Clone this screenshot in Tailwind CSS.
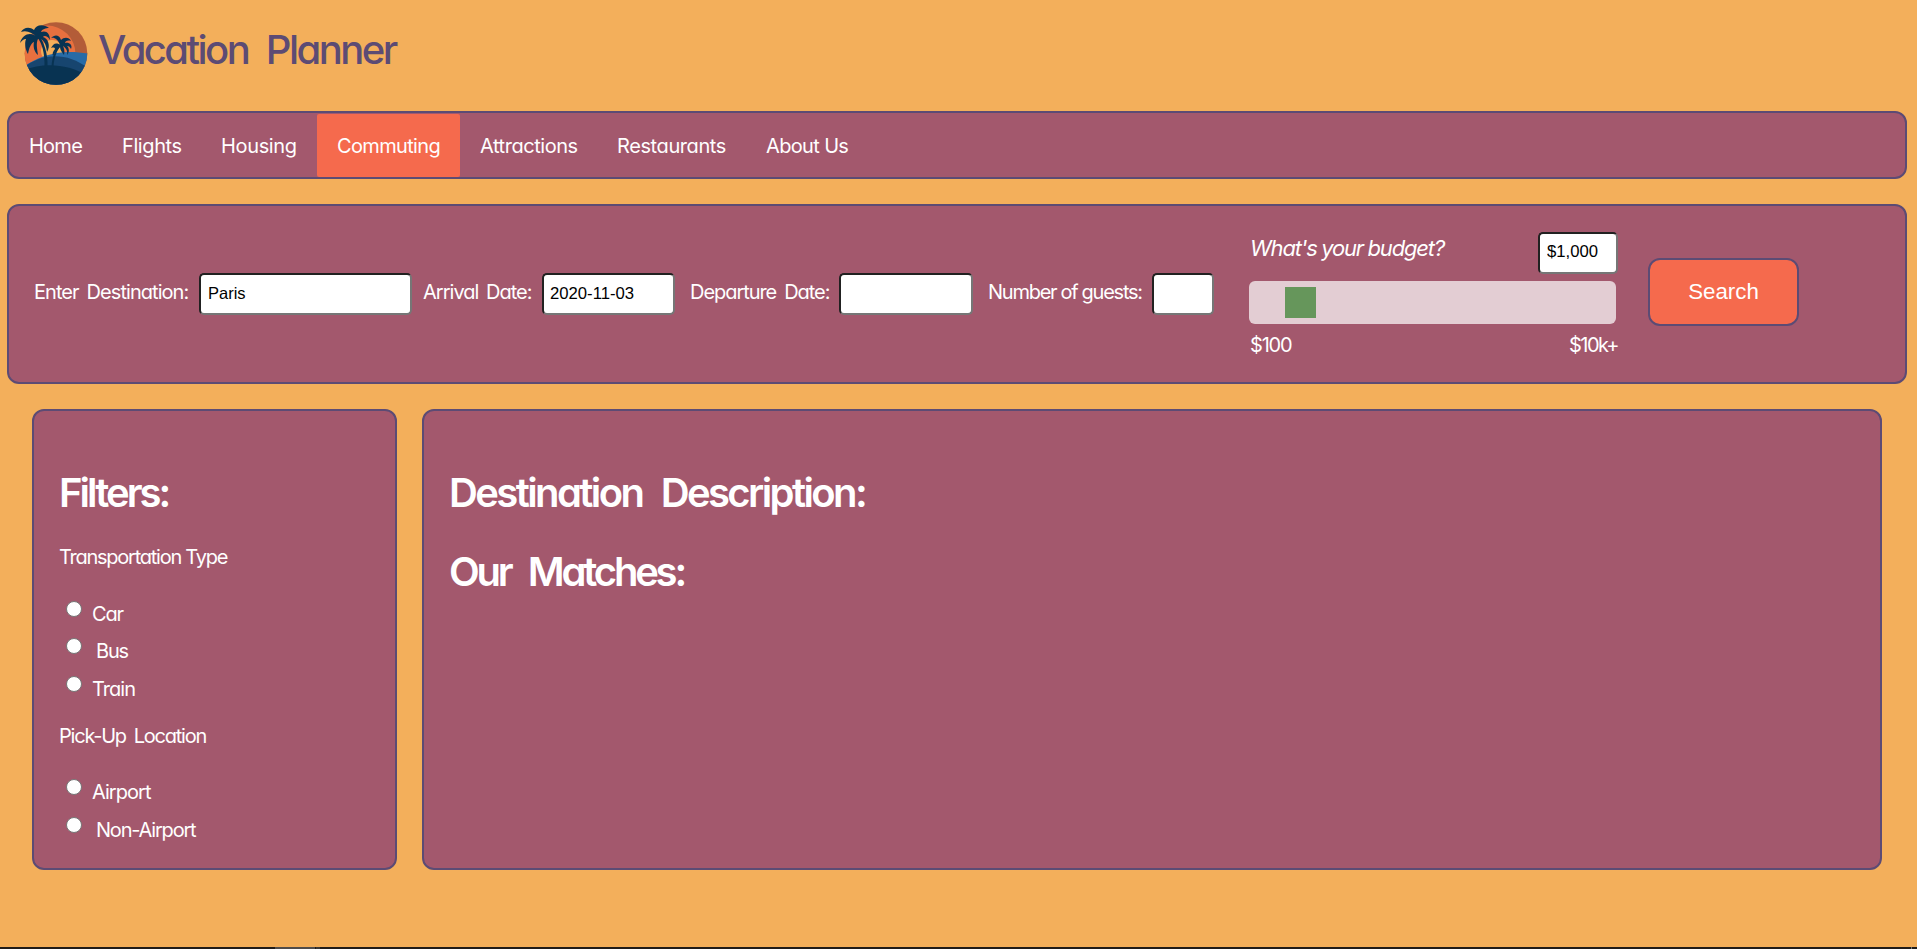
<!DOCTYPE html>
<html lang="en">
<head>
<meta charset="utf-8">
<title>Vacation Planner</title>
<script src="https://cdn.jsdelivr.net/npm/@tailwindcss/browser@4"></script>
</head>
<body class="flex h-[949px] w-[1917px] flex-col overflow-hidden bg-[#f3af5b] font-['Inter',sans-serif] text-xl whitespace-nowrap text-white [font-feature-settings:'cv11']">
<header class="flex h-[111px] pt-[10px] pl-[10px]">
<svg class="size-[90px]" viewBox="0 0 90 90">
<defs><clipPath id="disc"><circle cx="46" cy="43.5" r="31.3"/></clipPath></defs>
<g clip-path="url(#disc)">
<rect width="90" height="90" fill="#b35c38"/>
<circle cx="37" cy="44" r="28.5" fill="#e8703f"/>
<circle cx="42" cy="41" r="11" fill="#f3af5b"/>
<path d="M12 58C28 46 50 38 80 44V90H12Z" fill="#286ba6"/>
<path d="M12 59C30 43 58 41 80 60V90H12Z" fill="#17456f"/>
<path d="M12 61C32 52 58 53 80 67V90H12Z" fill="#083352"/>
</g>
<g fill="#083352">
<path d="M27 27C32 33 35 43 34.500 57H37.500C38 43 34 33 29.500 26Z"/>
<path d="M28 28C23 22 13 22 10 33C13 29 15 29 16 29C14 34 16 41 18 44C19 38 21 33 24 32C23 36 24 42 28 45C27 38 26 33 28 29C32 28 36 32 37 42C41 36 38 28 33 27C34 25 38 26 40 30C40 23 36 20 31 22C32 19 36 18 39 18C34 14 26 14 24 20C19 16 13 18 11 22C16 20 22 22 28 28Z"/>
<path d="M50 34C46 38 42 46 41.500 57H43.500C44 47 47 40 51.500 35Z"/>
<path d="M50 35C46 32 43 34 41 38C44 37 45 38 45 39C43 41 42 44 43 46C45 43 47 39 50 37C50 40 52 42 54 45C55 41 54 38 53 36C56 38 58 41 57 45C60 42 59 38 57 36C59 36 60 37 61 39C63 35 59 32 55 33C55 31 58 30 61 31C59 27 54 27 51 30C49 24 44 25 41 28C44 27 48 29 50 35Z"/>
</g>
</svg>
<h1 class="mt-6 -ml-[2px] text-[40px] leading-[32px] font-[450] tracking-[-2.55px] [word-spacing:9.5px] text-[#5c4b74]">Vacation Planner</h1>
</header>
<nav class="ml-[7px] flex h-[68px] w-[1900px] rounded-xl border-2 border-[#5c4b74] bg-[#a3586d] pt-px leading-[65px]">
<a class="w-[92px] pl-5 tracking-[-.75px]">Home</a>
<a class="w-[100px] pl-[21px] tracking-[-.4px]">Flights</a>
<a class="w-[116px] pl-5 tracking-[-.35px]">Housing</a>
<a class="h-[63px] w-[143px] rounded-xs bg-[#f56a4d] pl-5 tracking-[-.65px]">Commuting</a>
<a class="w-[137px] pl-5 tracking-[-.45px]">Attractions</a>
<a class="w-[149px] pl-5 tracking-[-.4px]">Restaurants</a>
<a class="pl-5 tracking-[-.65px]">About Us</a>
</nav>
<form class="mt-[25px] ml-[7px] flex h-[180px] w-[1900px] items-center rounded-xl border-2 border-[#5c4b74] bg-[#a3586d] pl-6">
<label class="w-[166px] pb-1 pl-px tracking-[-.95px] [word-spacing:3.3px]">Enter Destination:</label>
<input class="h-[42px] w-[213px] rounded-[5px] border-2 border-t-[#212121] border-r-[#767676] border-b-[#767676] border-l-[#212121] bg-white px-[7px] pb-px font-['Liberation_Sans',sans-serif] text-[16.5px] text-black" value="Paris">
<label class="ml-[11px] w-[119px] pb-1 tracking-[-.97px] [word-spacing:2.8px]">Arrival Date:</label>
<input class="h-[42px] w-[133px] rounded-[5px] border-2 border-t-[#212121] border-r-[#767676] border-b-[#767676] border-l-[#212121] bg-white px-1.5 pb-px font-['Liberation_Sans',sans-serif] text-[16.7px] text-black" value="2020-11-03">
<label class="ml-[15px] w-[149px] pb-1 tracking-[-1.05px] [word-spacing:3.4px]">Departure Date:</label>
<input class="h-[42px] w-[134px] rounded-[5px] border-2 border-t-[#212121] border-r-[#767676] border-b-[#767676] border-l-[#212121] bg-white">
<label class="ml-[15px] w-[164px] pb-1 tracking-[-1.25px] [word-spacing:-.2px]">Number of guests:</label>
<input class="h-[42px] w-[62px] rounded-[5px] border-2 border-t-[#212121] border-r-[#767676] border-b-[#767676] border-l-[#212121] bg-white">
<div class="mt-[26px] ml-[35px] flex w-[368px] flex-col self-start">
<div class="flex h-[42px] items-center justify-between">
<i class="pb-[10px] pl-px text-[22px] tracking-[-1.15px] [word-spacing:-.6px]">What's your budget?</i>
<input class="-mr-px h-[42px] w-[80px] rounded-[5px] border-2 border-t-[#212121] border-r-[#767676] border-b-[#767676] border-l-[#212121] bg-white px-[7px] pb-0.5 font-['Liberation_Sans',sans-serif] text-[16.7px] text-black" value="$1,000">
</div>
<div class="mt-[7px] flex h-[43px] w-[367px] items-center rounded-md bg-[#e3cdd3] pl-9"><span class="h-[31px] w-[31px] bg-[#66965b]"></span></div>
<div class="mt-2 flex justify-between leading-[26px]"><span class="pl-px tracking-[-1.2px]">$100</span><span class="-mr-px tracking-[-1.6px]">$10k+</span></div>
</div>
<button type="button" class="mb-1 ml-[31px] h-[68px] w-[151px] rounded-xl border-2 border-[#5c4b74] bg-[#f56a4d] pb-px font-['Liberation_Sans',sans-serif] text-[22.3px]">Search</button>
</form>
<main class="mt-[25px] ml-8 flex h-[461px] gap-[25px]">
<aside class="w-[365px] rounded-xl border-2 border-[#5c4b74] bg-[#a3586d] pt-[58px] pl-6">
<h2 class="pl-px text-[40px] leading-[48px] font-semibold tracking-[-2.95px]">Filters:</h2>
<p class="mt-7 pl-px leading-6 tracking-[-1.25px]">Transportation Type</p>
<div class="mt-[26px]">
<label class="flex h-[37.5px] items-center tracking-[-1.2px]"><input type="radio" name="t" class="mr-[10px] mb-[9px] ml-2 size-4 appearance-none rounded-full border border-[#767676] bg-white">Car</label>
<label class="flex h-[37.5px] items-center tracking-[-1.2px]"><input type="radio" name="t" class="mr-[14px] mb-[11px] ml-2 size-4 appearance-none rounded-full border border-[#767676] bg-white">Bus</label>
<label class="flex h-[37.5px] items-center tracking-[-.95px]"><input type="radio" name="t" class="mr-[10px] mb-[9px] ml-2 size-4 appearance-none rounded-full border border-[#767676] bg-white">Train</label>
</div>
<p class="mt-4 pl-px leading-6 tracking-[-1.22px] [word-spacing:3.4px]">Pick-Up Location</p>
<div class="mt-[26px]">
<label class="flex h-[37.5px] items-center tracking-[-.95px]"><input type="radio" name="p" class="mr-[10px] mb-[11px] ml-2 size-4 appearance-none rounded-full border border-[#767676] bg-white">Airport</label>
<label class="flex h-[37.5px] items-center tracking-[-1.2px]"><input type="radio" name="p" class="mr-[14px] mb-[9px] ml-2 size-4 appearance-none rounded-full border border-[#767676] bg-white">Non-Airport</label>
</div>
</aside>
<section class="w-[1460px] rounded-xl border-2 border-[#5c4b74] bg-[#a3586d] pt-[58px] pl-[25px]">
<h2 class="text-[40px] leading-[48px] font-semibold tracking-[-2.6px] [word-spacing:10.8px]">Destination Description:</h2>
<h2 class="mt-[31px] text-[40px] leading-[48px] font-semibold tracking-[-3.2px] [word-spacing:10.4px]">Our Matches:</h2>
</section>
</main>
<footer class="mt-auto flex h-0.5 bg-[#201c19]"><span class="ml-[275px] w-10 bg-[#504c49]"></span><span class="ml-px w-1 bg-[#3a3633]"></span><span class="mr-[5px] ml-auto w-px bg-[#777]"></span></footer>
</body>
</html>
